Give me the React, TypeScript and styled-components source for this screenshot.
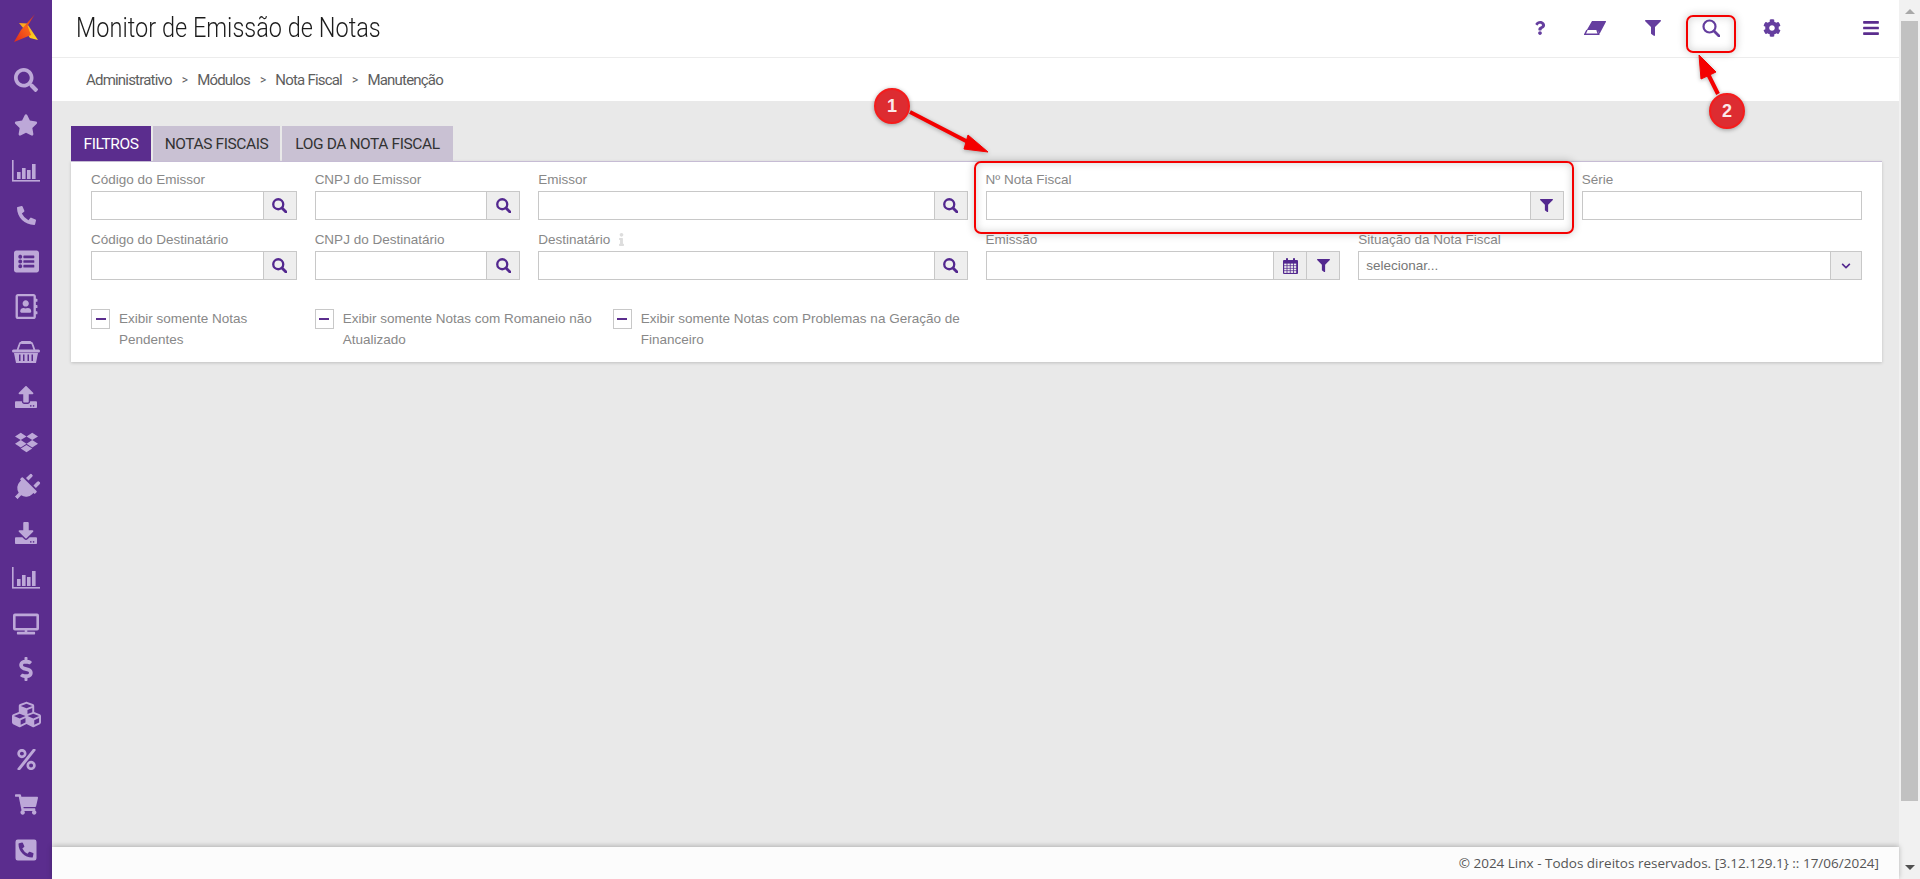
import React from "react";
import styled, { createGlobalStyle } from "styled-components";
import {
  FaBars,
  FaChevronDown,
  FaCog,
  FaCubes,
  FaDollarSign,
  FaDownload,
  FaDropbox,
  FaFilter,
  FaInfo,
  FaListAlt,
  FaPercent,
  FaPhoneAlt,
  FaPhoneSquareAlt,
  FaPlug,
  FaQuestion,
  FaRegAddressBook,
  FaSearch,
  FaShoppingCart,
  FaStar,
  FaTv,
  FaUpload,
} from "react-icons/fa";

const PURPLE = "#5b2d8e";
const SIDE_ICON = "#bda8d8";
const HEAD_FONT = `Roboto, "Liberation Sans", sans-serif`;

const GlobalStyle = createGlobalStyle`
  html, body {
    margin: 0;
    padding: 0;
    height: 100%;
    overflow: hidden;
    background: #e9e9e9;
  }
  * {
    box-sizing: border-box;
  }
`;

function ChartIcon() {
  return (
    <svg width="28" height="22" viewBox="0 0 28 22" fill="currentColor">
      <rect x="0" y="0" width="1.6" height="21" />
      <rect x="0" y="20" width="28" height="1.6" />
      <rect x="5" y="12" width="3.6" height="7" />
      <rect x="10" y="8" width="3.6" height="11" />
      <rect x="15" y="10" width="3.6" height="9" />
      <rect x="20" y="4" width="3.6" height="15" />
    </svg>
  );
}

function BasketIcon() {
  return (
    <svg width="28" height="22" viewBox="0 0 28 22" fill="currentColor">
      <path
        d="M5.5 9 L7.5 3.2 Q8 1.5 10 1.5 H18 Q20 1.5 20.500 3.2 L22.500 9"
        fill="none"
        stroke="currentColor"
        strokeWidth="1.8"
      />
      <rect x="9" y="0" width="10" height="3" rx="1" />
      <rect x="0" y="8.500" width="28" height="3" rx="1.500" />
      <path d="M2 12 H26 L24 22 H4 Z" />
      <g fill={PURPLE}>
        <rect x="7" y="13.500" width="1.500" height="6.500" />
        <rect x="11" y="13.500" width="1.500" height="6.500" />
        <rect x="15.500" y="13.500" width="1.500" height="6.500" />
        <rect x="19.500" y="13.500" width="1.500" height="6.500" />
      </g>
    </svg>
  );
}

function EraserIcon() {
  return (
    <svg width="22" height="14" viewBox="0 0 22 14" fill="currentColor">
      <path d="M8 0 H21.500 Q22.300 0 22 0.800 L15.500 13 L13.500 9 H2.800 Z" />
      <path
        d="M3 9 L0.900 13.200 H14.600 L13 9"
        fill="none"
        stroke="currentColor"
        strokeWidth="1.500"
      />
    </svg>
  );
}

function LoupeIcon({ size, weight }: { size: number; weight: number }) {
  return (
    <svg width={size} height={size} viewBox="0 0 18 18" fill="none" stroke="currentColor">
      <circle cx="7.500" cy="7.500" r="6" strokeWidth={weight} />
      <line x1="12" y1="12" x2="17" y2="17" strokeWidth={weight + 0.6} strokeLinecap="round" />
    </svg>
  );
}

function CalendarIcon() {
  return (
    <svg width="15" height="16" viewBox="0 0 15 16" fill="currentColor">
      <rect x="0" y="2" width="15" height="14" rx="1" />
      <rect x="3" y="0" width="2" height="4" rx="0.800" />
      <rect x="10" y="0" width="2" height="4" rx="0.800" />
      <g fill="#eee">
        {[0, 1, 2, 3].map((row) =>
          [0, 1, 2, 3].map((col) => (
            <rect key={`${row}-${col}`} x={1.2 + col * 3.2} y={5.6 + row * 2.5} width="2.400" height="1.800" />
          ))
        )}
      </g>
    </svg>
  );
}

function Logo() {
  return (
    <svg width="30" height="32" viewBox="0 0 30 32">
      <defs>
        <linearGradient id="bolt" x1="0" y1="1" x2="1" y2="0">
          <stop offset="0" stopColor="#e22a1c" />
          <stop offset="0.55" stopColor="#f8621a" />
          <stop offset="1" stopColor="#b82a35" />
        </linearGradient>
        <linearGradient id="wing" x1="0" y1="0" x2="1" y2="1">
          <stop offset="0" stopColor="#f8a01c" />
          <stop offset="1" stopColor="#ffd71f" />
        </linearGradient>
      </defs>
      <polygon points="8,10 16,10.500 27,27 19,25 13,16" fill="url(#wing)" />
      <polygon points="24,1 16.500,13 20,22 3,29 10,17" fill="url(#bolt)" />
    </svg>
  );
}

const sideIcons: [React.ReactNode, number?][] = [
  [<FaSearch size={24} />],
  [<FaStar size={24} />],
  [<ChartIcon />],
  [<FaPhoneAlt size={19} />],
  [<FaListAlt size={25} />],
  [<FaRegAddressBook size={25} />],
  [<BasketIcon />],
  [<FaUpload size={22} />],
  [<FaDropbox size={23} />],
  [<FaPlug size={28} />, 45],
  [<FaDownload size={22} />],
  [<ChartIcon />],
  [<FaTv size={26} />],
  [<FaDollarSign size={24} />],
  [<FaCubes size={29} />],
  [<FaPercent size={21} />],
  [<FaShoppingCart size={23} />],
  [<FaPhoneSquareAlt size={24} />],
];

const topIcons: [React.ReactNode, number][] = [
  [<FaQuestion size={14} />, 48],
  [<EraserIcon />, 62],
  [<FaFilter size={16} />, 54],
  [<LoupeIcon size={18} weight={2.2} />, 62],
  [<FaCog size={18} />, 60],
];

function SearchBtn() {
  return (
    <Addon>
      <LoupeIcon size={15} weight={2.8} />
    </Addon>
  );
}

function FilterBtn() {
  return (
    <Addon>
      <FaFilter size={13} />
    </Addon>
  );
}

function Field({
  label,
  span,
  info,
  children,
}: {
  label: string;
  span: number;
  info?: boolean;
  children?: React.ReactNode;
}) {
  return (
    <FieldWrap $span={span}>
      <Label>
        {label}
        {info && (
          <InfoMark>
            <FaInfo size={13} />
          </InfoMark>
        )}
      </Label>
      <InputGroup>
        <FakeInput />
        {children}
      </InputGroup>
    </FieldWrap>
  );
}

function Check({ span, children }: { span: number; children: React.ReactNode }) {
  return (
    <CheckWrap $span={span}>
      <CheckBox>
        <Dash />
      </CheckBox>
      <CheckText>{children}</CheckText>
    </CheckWrap>
  );
}

export default function App() {
  return (
    <Page>
      <GlobalStyle />
      <Sidebar>
        <LogoSlot>
          <Logo />
        </LogoSlot>
        {sideIcons.map(([icon, rotate], i) => (
          <SideItem key={i} $rotate={rotate}>
            {icon}
          </SideItem>
        ))}
      </Sidebar>

      <Main>
        <Header>
          <Title>Monitor de Emissão de Notas</Title>
          <TopActions>
            {topIcons.map(([icon, w], i) => (
              <TopBtn key={i} $width={w}>
                {icon}
              </TopBtn>
            ))}
            <MenuBtn>
              <FaBars size={18} />
            </MenuBtn>
          </TopActions>
        </Header>

        <Breadcrumb>
          <span>Administrativo</span>
          <Sep>&gt;</Sep>
          <span>Módulos</span>
          <Sep>&gt;</Sep>
          <span>Nota Fiscal</span>
          <Sep>&gt;</Sep>
          <span>Manutenção</span>
        </Breadcrumb>

        <Content>
          <Tabs>
            <Tab $active $width={80}>FILTROS</Tab>
            <Tab $width={127}>NOTAS FISCAIS</Tab>
            <Tab $width={171}>LOG DA NOTA FISCAL</Tab>
          </Tabs>
          <Panel>
            <FormGrid>
              <Field label="Código do Emissor" span={3}><SearchBtn /></Field>
              <Field label="CNPJ do Emissor" span={3}><SearchBtn /></Field>
              <Field label="Emissor" span={6}><SearchBtn /></Field>
              <Field label="Nº Nota Fiscal" span={8}><FilterBtn /></Field>
              <Field label="Série" span={4} />

              <Field label="Código do Destinatário" span={3}><SearchBtn /></Field>
              <Field label="CNPJ do Destinatário" span={3}><SearchBtn /></Field>
              <Field label="Destinatário" span={6} info><SearchBtn /></Field>
              <Field label="Emissão" span={5}>
                <Addon $width={33}>
                  <CalendarIcon />
                </Addon>
                <FilterBtn />
              </Field>
              <FieldWrap $span={7}>
                <Label>Situação da Nota Fiscal</Label>
                <InputGroup>
                  <FakeInput $padded>selecionar...</FakeInput>
                  <Addon $width={31}>
                    <FaChevronDown size={10} />
                  </Addon>
                </InputGroup>
              </FieldWrap>
            </FormGrid>

            <ChecksGrid>
              <Check span={3}>Exibir somente Notas Pendentes</Check>
              <Check span={4}>Exibir somente Notas com Romaneio não Atualizado</Check>
              <Check span={5}>Exibir somente Notas com Problemas na Geração de Financeiro</Check>
            </ChecksGrid>
          </Panel>
        </Content>

        <Footer>© 2024 Linx - Todos direitos reservados. [3.12.129.1{"}"} :: 17/06/2024]</Footer>
      </Main>

      <Scrollbar>
        <ArrowUp />
        <Thumb />
        <ArrowDown />
      </Scrollbar>

      <MarkBox $x={974} $y={161} $w={600} $h={73} />
      <MarkBox $x={1686} $y={15} $w={50} $h={38} />
      <Arrows width="1920" height="879" viewBox="0 0 1920 879">
        <g fill="#f40000" stroke="#f40000">
          <line x1="910" y1="112" x2="968" y2="142" strokeWidth="4" />
          <polygon points="988,152 964,149 968,135" strokeWidth="1" />
          <line x1="1718" y1="94" x2="1708" y2="74" strokeWidth="4" />
          <polygon points="1699,55 1701,79 1716,72" strokeWidth="1" />
        </g>
      </Arrows>
      <Badge $x={892} $y={106}>1</Badge>
      <Badge $x={1727} $y={111}>2</Badge>
    </Page>
  );
}

const Page = styled.div`
  position: relative;
  display: flex;
  width: 1920px;
  height: 879px;
  overflow: hidden;
  font-family: "Liberation Sans", Arial, sans-serif;
`;

const Sidebar = styled.nav`
  flex: 0 0 52px;
  display: flex;
  flex-direction: column;
  background: ${PURPLE};
  color: ${SIDE_ICON};
`;

const LogoSlot = styled.div`
  flex: 0 0 57.4px;
  display: flex;
  align-items: center;
  justify-content: center;
  padding-top: 1px;
`;

const SideItem = styled.div<{ $rotate?: number }>`
  flex: 0 0 45.3px;
  display: flex;
  align-items: center;
  justify-content: center;

  svg {
    transform: ${(p) => (p.$rotate ? `rotate(${p.$rotate}deg)` : "none")};
  }
`;

const Main = styled.div`
  flex: 1;
  min-width: 0;
  display: flex;
  flex-direction: column;
  background: #e9e9e9;
`;

const Header = styled.header`
  flex: 0 0 58px;
  display: flex;
  align-items: center;
  justify-content: space-between;
  padding: 0 8px 2px 24px;
  background: #fff;
  border-bottom: 1px solid #ececec;
`;

const Title = styled.h1`
  margin: 0;
  font-family: ${HEAD_FONT};
  font-weight: 300;
  font-size: 28px;
  white-space: nowrap;
  color: #1c1c1c;
  transform: scaleX(0.84);
  transform-origin: left center;
`;

const TopActions = styled.div`
  display: flex;
  align-items: center;
  color: #653e9f;
`;

const TopBtn = styled.div<{ $width: number }>`
  width: ${(p) => p.$width}px;
  display: flex;
  align-items: center;
  justify-content: center;
`;

const MenuBtn = styled.div`
  width: 40px;
  margin-left: 49px;
  display: flex;
  align-items: center;
  justify-content: center;
  color: ${PURPLE};
`;

const Breadcrumb = styled.div`
  flex: 0 0 43px;
  display: flex;
  align-items: center;
  gap: 10px;
  padding-left: 34px;
  background: #fff;
  font-family: ${HEAD_FONT};
  font-size: 15px;
  letter-spacing: -0.8px;
  color: #5e5e5e;
`;

const Sep = styled.span`
  font-size: 12px;
`;

const Content = styled.main`
  flex: 1;
  padding: 25px 17px 0 19px;
`;

const Tabs = styled.div`
  display: flex;
  gap: 2px;
`;

const Tab = styled.div<{ $active?: boolean; $width: number }>`
  width: ${(p) => p.$width}px;
  height: 35px;
  display: flex;
  align-items: center;
  justify-content: center;
  font-family: ${HEAD_FONT};
  font-size: 15.5px;
  letter-spacing: -0.4px;
  background: ${(p) => (p.$active ? PURPLE : "#c9c1d3")};
  color: ${(p) => (p.$active ? "#fff" : "#333")};
`;

const Panel = styled.section`
  height: 201px;
  padding: 8px 20px 0;
  background: #fff;
  border-top: 1px solid #c6bcd4;
  box-shadow: 0 1px 3px rgba(0, 0, 0, 0.18);
`;

const FormGrid = styled.div`
  display: grid;
  grid-template-columns: repeat(24, 1fr);
  column-gap: 18px;
  row-gap: 10px;
`;

const FieldWrap = styled.div<{ $span: number }>`
  grid-column: span ${(p) => p.$span};
  min-width: 0;
`;

const Label = styled.label`
  display: flex;
  align-items: flex-start;
  gap: 5px;
  height: 21px;
  line-height: 19px;
  font-size: 13.5px;
  color: #888;
`;

const InfoMark = styled.span`
  display: inline-flex;
  align-items: center;
  height: 19px;
  color: #ddd;
`;

const InputGroup = styled.div`
  display: flex;
  height: 29px;
  background: #fff;
  border: 1px solid #c8c8c8;
`;

const FakeInput = styled.div<{ $padded?: boolean }>`
  flex: 1;
  display: flex;
  align-items: center;
  padding-left: ${(p) => (p.$padded ? "7px" : "0")};
  font-size: 13.5px;
  color: #777;
`;

const ChecksGrid = styled.div`
  display: grid;
  grid-template-columns: repeat(24, 1fr);
  column-gap: 18px;
  margin-top: 28px;
`;

const CheckWrap = styled.div<{ $span: number }>`
  grid-column: span ${(p) => p.$span};
  display: flex;
  align-items: flex-start;
  gap: 9px;
`;

const CheckBox = styled.div`
  flex: 0 0 19px;
  height: 20px;
  margin-top: 1px;
  display: flex;
  align-items: center;
  justify-content: center;
  background: #fff;
  border: 1px solid #c8c8c8;
`;

const Dash = styled.div`
  width: 10px;
  height: 2px;
  background: ${PURPLE};
`;

const CheckText = styled.div`
  font-size: 13.5px;
  line-height: 21px;
  color: #888;
`;

const Footer = styled.footer`
  position: relative;
  flex: 0 0 32px;
  display: flex;
  align-items: center;
  justify-content: flex-end;
  padding-right: 20px;
  background: #fcfcfc;
  box-shadow: 0 -1px 5px rgba(0, 0, 0, 0.25);
  font-family: "Open Sans", sans-serif;
  font-size: 13.5px;
  color: #555;
`;

const Addon = styled.div<{ $width?: number }>`
  flex: 0 0 ${(p) => p.$width ?? 33}px;
  display: flex;
  align-items: center;
  justify-content: center;
  background: #eee;
  border-left: 1px solid #c8c8c8;
  color: #53288f;
`;

const Scrollbar = styled.div`
  flex: 0 0 21px;
  display: flex;
  flex-direction: column;
  align-items: center;
  background: #f1f1f1;
`;

const ArrowUp = styled.div`
  width: 0;
  height: 0;
  margin: 9px 0 7px;
  border-left: 5px solid transparent;
  border-right: 5px solid transparent;
  border-bottom: 5px solid #a8a8a8;
`;

const Thumb = styled.div`
  width: 17px;
  height: 780px;
  background: #c1c1c1;
`;

const ArrowDown = styled.div`
  width: 0;
  height: 0;
  margin-top: 64px;
  border-left: 5px solid transparent;
  border-right: 5px solid transparent;
  border-top: 5px solid #505050;
`;

const MarkBox = styled.div<{ $x: number; $y: number; $w: number; $h: number }>`
  position: absolute;
  left: ${(p) => p.$x}px;
  top: ${(p) => p.$y}px;
  width: ${(p) => p.$w}px;
  height: ${(p) => p.$h}px;
  border: 2px solid #f40000;
  border-radius: 7px;
  box-shadow: 0 0 8px rgba(0, 0, 0, 0.22), inset 0 0 8px rgba(0, 0, 0, 0.18);
`;

const Arrows = styled.svg`
  position: absolute;
  left: 0;
  top: 0;
  pointer-events: none;
  filter: drop-shadow(0 1px 2px rgba(0, 0, 0, 0.3));
`;

const Badge = styled.div<{ $x: number; $y: number }>`
  position: absolute;
  left: ${(p) => p.$x - 18}px;
  top: ${(p) => p.$y - 18}px;
  width: 36px;
  height: 36px;
  display: flex;
  align-items: center;
  justify-content: center;
  border-radius: 50%;
  background: #dd2c31;
  border: 2px solid #f51c1c;
  box-shadow: 0 1px 4px rgba(0, 0, 0, 0.35);
  font-size: 18px;
  font-weight: bold;
  color: #fbeaea;
`;
